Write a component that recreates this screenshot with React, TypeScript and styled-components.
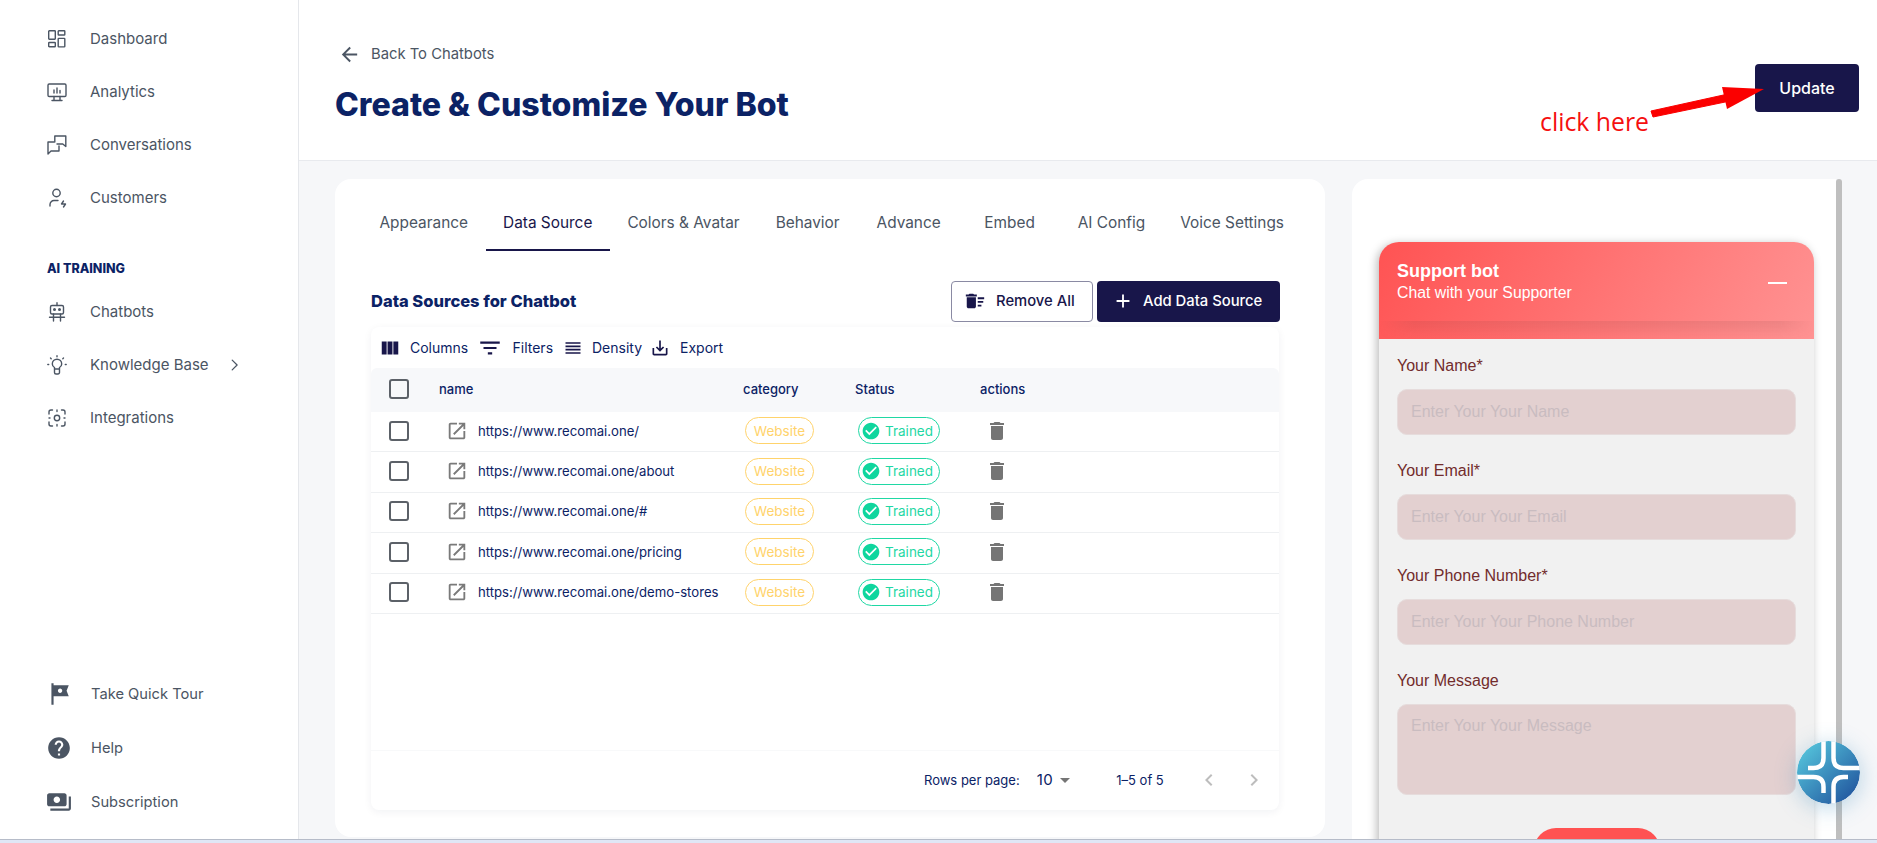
import React from 'react'
import styled, { createGlobalStyle } from 'styled-components'

const GlobalStyle = createGlobalStyle`
  html, body, #root {
    margin: 0;
    height: 100%;
    overflow: hidden;
  }
  body {
    background: #ffffff;
    font-family: Inter, "Liberation Sans", sans-serif;
    color: #0b2265;
  }
`

const paths = {
  help: 'M12 2C6.48 2 2 6.48 2 12s4.48 10 10 10 10-4.48 10-10S17.52 2 12 2zm1 17h-2v-2h2v2zm2.07-7.75l-.9.92C13.45 12.9 13 13.5 13 15h-2v-.5c0-1.1.45-2.1 1.17-2.83l1.24-1.26c.37-.36.59-.86.59-1.41 0-1.1-.9-2-2-2s-2 .9-2 2H8c0-2.21 1.79-4 4-4s4 1.79 4 4c0 .88-.36 1.68-.93 2.25z',
  tour: 'M21 4H7V2H5v20h2v-8h14l-2-5 2-5zm-6 5c0 1.1-.9 2-2 2s-2-.9-2-2 .9-2 2-2 2 .9 2 2z',
  payments: 'M19 14V6c0-1.1-.9-2-2-2H3c-1.1 0-2 .9-2 2v8c0 1.1.9 2 2 2h14c1.1 0 2-.9 2-2zm-9-1c-1.66 0-3-1.34-3-3s1.34-3 3-3 3 1.34 3 3-1.34 3-3 3zm13-6v11c0 1.1-.9 2-2 2H4v-2h17V7h2z',
  columns: 'M14.67 5v14H9.33V5h5.34zm1 14H21V5h-5.33v14zm-7.34 0V5H3v14h5.33z',
  filter: 'M10 18h4v-2h-4v2zM3 6v2h18V6H3zm3 7h12v-2H6v2z',
  density: 'M3 15h18v-2H3v2zm0 4h18v-2H3v2zm0-8h18V9H3v2zm0-6v2h18V5H3z',
  save: 'M19 12v7H5v-7H3v7c0 1.1.9 2 2 2h14c1.1 0 2-.9 2-2v-7h-2zm-6 .67l2.59-2.58L17 11.5l-5 5-5-5 1.41-1.41L11 12.67V3h2z',
  open: 'M19 19H5V5h7V3H5c-1.11 0-2 .9-2 2v14c0 1.1.89 2 2 2h14c1.1 0 2-.9 2-2v-7h-2v7zM14 3v2h3.59l-9.83 9.83 1.41 1.41L19 6.41V10h2V3h-7z',
  trash: 'M6 19c0 1.1.9 2 2 2h8c1.1 0 2-.9 2-2V7H6v12zM19 4h-3.5l-1-1h-5l-1 1H5v2h14V4z',
  check: 'M12 2C6.48 2 2 6.48 2 12s4.48 10 10 10 10-4.48 10-10S17.52 2 12 2zm-2 15l-5-5 1.41-1.41L10 14.17l7.59-7.59L19 8l-9 9z',
  back: 'M20 11H7.83l5.59-5.59L12 4l-8 8 8 8 1.41-1.41L7.83 13H20v-2z',
  add: 'M19 13h-6v6h-2v-6H5v-2h6V5h2v6h6v2z',
  sweep: 'M15 16h4v2h-4zm0-8h7v2h-7zm0 4h6v2h-6zM3 18c0 1.1.9 2 2 2h6c1.1 0 2-.9 2-2V8H3v10zM14 5h-3l-1-1H6L5 5H2v2h12z',
  drop: 'M7 10l5 5 5-5z',
  left: 'M15.41 7.41 14 6l-6 6 6 6 1.41-1.41L10.83 12z',
  right: 'M10 6 8.59 7.41 13.17 12l-4.58 4.59L10 18l6-6z',
}

const Glyph = (props: { d: string; size: number; color: string }) => (
  <svg width={props.size} height={props.size} viewBox="0 0 24 24" fill={props.color} style={{ flexShrink: 0 }}>
    <path d={props.d} />
  </svg>
)

const NavSvg = styled.svg`
  width: 20px;
  height: 20px;
  flex-shrink: 0;
  fill: none;
  stroke: #4b5563;
  stroke-width: 1.4;
  stroke-linecap: round;
  stroke-linejoin: round;
`

const DashIcon = () => (
  <NavSvg viewBox="0 0 20 20">
    <rect x="1.700" y="1.700" width="6.600" height="8.500" rx=".6" />
    <rect x="11.200" y="1.700" width="6.600" height="4.300" rx=".6" />
    <rect x="1.700" y="13.500" width="6.600" height="4.300" rx=".6" />
    <rect x="11.200" y="9.400" width="6.600" height="8.500" rx=".6" />
  </NavSvg>
)
const AnalyticsIcon = () => (
  <NavSvg viewBox="0 0 20 20">
    <rect x="1" y="2" width="18" height="12.500" rx="1.200" />
    <path d="M7 14.500v4M13 14.500v4M5 18.500h10M7 11V8M10 11V6M13 11V8.500" />
  </NavSvg>
)
const ChatIcon = () => (
  <NavSvg viewBox="0 0 20 20">
    <path d="M7.800 7V1h11v10.500l-3-2.500H10" />
    <path d="M7 7H1v12l3-3h8v-5" />
  </NavSvg>
)
const CustomerIcon = () => (
  <NavSvg viewBox="0 0 20 20">
    <circle cx="9.500" cy="5" r="3.700" />
    <path d="M3 18v-1.500a4 4 0 0 1 4-4h4M16.500 13l-2 3h4l-2 3" />
  </NavSvg>
)
const BotIcon = () => (
  <NavSvg viewBox="0 0 20 20">
    <rect x="3.500" y="3.500" width="13" height="8.500" rx="1.500" />
    <path d="M10 .8v2.700M2.500 15.300h15M6.500 12v7M13.500 12v7" />
    <circle cx="7.500" cy="7.500" r=".8" />
    <circle cx="12.500" cy="7.500" r=".8" />
  </NavSvg>
)
const BulbIcon = () => (
  <NavSvg viewBox="0 0 20 20">
    <path d="M7.500 14v-1.500c-1.500-1-2.200-2.300-2.200-3.600a4.700 4.700 0 0 1 9.400 0c0 1.300-.7 2.600-2.200 3.600V14zM7.500 14v3.500a1.500 1.500 0 0 0 1.500 1.500h2a1.500 1.500 0 0 0 1.500-1.500V14" />
    <path d="M10 .8v.9M3.500 3l.7.7M16.500 3l-.7.7M.8 9.500h.9M18.300 9.500h.9" />
  </NavSvg>
)
const IntegrationIcon = () => (
  <NavSvg viewBox="0 0 20 20">
    <circle cx="10" cy="10" r="2.700" />
    <path d="M2 6V4a2 2 0 0 1 2-2h1.500M14.500 2H16a2 2 0 0 1 2 2v2M18 14v2a2 2 0 0 1-2 2h-1.500M5.500 18H4a2 2 0 0 1-2-2v-2M10 2v1.500M10 16.500V18M2 10h1M17 10h1" />
  </NavSvg>
)
const Chevron = () => (
  <NavSvg viewBox="0 0 20 20" style={{ width: 14, height: 14, marginLeft: -4 }}>
    <path d="M6 3l7 7-7 7" strokeWidth="1.800" />
  </NavSvg>
)

const Page = styled.div`
  height: 843px;
  display: flex;
  flex-direction: column;
  overflow: hidden;
  position: relative;
`

const Shell = styled.div`
  flex: 1;
  min-height: 0;
  display: flex;
`

const BottomStrip = styled.div`
  height: 3px;
  background: #e0e7f6;
  border-top: 1px solid #b6bcc9;
`

const Sidebar = styled.aside`
  width: 298px;
  flex-shrink: 0;
  background: #ffffff;
  border-right: 1px solid #e5e7eb;
  display: flex;
  flex-direction: column;
  justify-content: space-between;
`

const NavGroup = styled.nav`
  display: flex;
  flex-direction: column;
  padding-top: 12px;
`

const NavItem = styled.div`
  height: 53px;
  display: flex;
  align-items: center;
  padding-left: 47px;
  gap: 23px;
  font-size: 15px;
  color: #4b5563;
`

const NavLabel = styled.div`
  margin-top: 37px;
  margin-bottom: 9px;
  padding-left: 47px;
  font-size: 12.5px;
  line-height: 15px;
  font-weight: 800;
  color: #0b2265;
`

const FootGroup = styled.nav`
  display: flex;
  flex-direction: column;
  padding-bottom: 10px;
`

const FootItem = styled.div`
  height: 54px;
  display: flex;
  align-items: center;
  padding-left: 46px;
  gap: 19px;
  font-size: 14.7px;
  color: #4b5563;
`

const Main = styled.main`
  flex: 1;
  min-width: 0;
  display: flex;
  flex-direction: column;
  background: #f6f7f9;
`

const Header = styled.header`
  height: 161px;
  flex-shrink: 0;
  background: #ffffff;
  border-bottom: 1px solid #e8eaee;
  display: flex;
  justify-content: space-between;
  padding: 43px 18px 0 37px;
  box-sizing: border-box;
`

const BackLink = styled.div`
  display: flex;
  align-items: center;
  gap: 10px;
  height: 22px;
  padding-left: 2px;
  font-size: 14.8px;
  color: #4b5563;
`

const Title = styled.h1`
  margin: 19px 0 0 -1px;
  font-size: 32.1px;
  line-height: 42px;
  font-weight: 800;
  color: #0b2265;
`

const UpdateButton = styled.button`
  width: 104px;
  height: 48px;
  margin-top: 21px;
  border: 0;
  border-radius: 4px;
  background: #18164a;
  color: #ffffff;
  font: 500 16px Inter, sans-serif;
`

const Content = styled.div`
  flex: 1;
  min-height: 0;
  display: flex;
  padding: 18px 0 0 36px;
  gap: 27px;
`

const LeftCard = styled.section`
  width: 990px;
  height: 658px;
  flex-shrink: 0;
  background: #ffffff;
  border-radius: 16px;
  padding: 18px 46px 0 36px;
  box-sizing: border-box;
`

const Tabs = styled.div`
  display: flex;
  height: 54px;
  margin-left: -9px;
`

const Tab = styled.div<{ $active?: boolean }>`
  flex-shrink: 0;
  min-width: 101px;
  padding: 0 17.500px 2px;
  box-sizing: border-box;
  display: flex;
  align-items: center;
  justify-content: center;
  font-size: 15.4px;
  white-space: nowrap;
  color: ${(p) => (p.$active ? '#18164a' : '#4b5563')};
  border-bottom: 2px solid ${(p) => (p.$active ? '#18164a' : 'transparent')};
`

const TitleRow = styled.div`
  margin-top: 30px;
  height: 41px;
  display: flex;
  align-items: center;
  justify-content: space-between;
  margin-right: -1px;
`

const SectionTitle = styled.h2`
  margin: 0 0 2px;
  font-size: 16.5px;
  font-weight: 800;
  color: #0b2265;
`

const ButtonGroup = styled.div`
  display: flex;
  gap: 4px;
`

const OutlineButton = styled.button`
  width: 142px;
  height: 41px;
  display: flex;
  align-items: center;
  gap: 10px;
  padding: 0 0 2px 12px;
  border: 1px solid #8a8aa3;
  border-radius: 4px;
  background: #ffffff;
  color: #18164a;
  font: 500 14.8px Inter, sans-serif;
`

const SolidButton = styled.button`
  width: 183px;
  height: 41px;
  display: flex;
  align-items: center;
  gap: 9px;
  padding: 0 0 2px 15px;
  border: 0;
  border-radius: 4px;
  background: #18164a;
  color: #ffffff;
  font: 500 14.8px Inter, sans-serif;
`

const TablePanel = styled.div`
  margin-top: 5px;
  height: 483px;
  background: #ffffff;
  border-radius: 8px;
  box-shadow: 0 2px 8px rgba(20, 30, 60, 0.06);
  display: flex;
  flex-direction: column;
`

const Toolbar = styled.div`
  height: 41px;
  flex-shrink: 0;
  display: flex;
  align-items: center;
  padding-left: 8px;
  font-size: 14px;
  color: #0b2265;
`

const ToolItem = styled.div<{ $gap: number; $width: number }>`
  display: flex;
  align-items: center;
  gap: ${(p) => p.$gap}px;
  width: ${(p) => p.$width}px;
`

const columns = '68px 304px 112px 125px 1fr'

const HeadRow = styled.div`
  height: 44px;
  flex-shrink: 0;
  padding-bottom: 2px;
  box-sizing: border-box;
  display: grid;
  grid-template-columns: ${columns};
  align-items: center;
  background: #f7f8fa;
  border-radius: 6px 6px 0 0;
  font-size: 13px;
  font-weight: 500;
  color: #0b2265;
`

const Row = styled.div`
  height: 40.4px;
  flex-shrink: 0;
  box-sizing: border-box;
  padding-bottom: 2px;
  display: grid;
  grid-template-columns: ${columns};
  align-items: center;
  border-bottom: 1px solid #eef0f2;
  font-size: 13px;
  color: #0b2265;
`

const CheckCell = styled.div`
  padding-left: 18px;
  display: flex;
`

const CheckBox = styled.div`
  width: 20px;
  height: 20px;
  box-sizing: border-box;
  border: 2px solid #5c6168;
  border-radius: 3px;
`

const NameCell = styled.div`
  display: flex;
  align-items: center;
  gap: 10px;
  padding-left: 7px;
  white-space: nowrap;
  font-size: 13.15px;
`

const Chip = styled.div<{ $color: string; $width: number; $start?: boolean }>`
  width: ${(p) => p.$width}px;
  height: 27px;
  box-sizing: border-box;
  display: flex;
  align-items: center;
  justify-content: ${(p) => (p.$start ? 'flex-start' : 'center')};
  padding-left: ${(p) => (p.$start ? 2 : 0)}px;
  gap: 4px;
  border: 1px solid ${(p) => p.$color};
  border-radius: 14px;
  color: ${(p) => p.$color};
  font-size: 13.5px;
`

const ChipCell = styled.div<{ $pad: number }>`
  padding-left: ${(p) => p.$pad}px;
`

const ActionCell = styled.div`
  padding-left: 5px;
  display: flex;
`

const TableFooter = styled.div`
  margin-top: auto;
  height: 60px;
  padding-bottom: 2px;
  box-sizing: border-box;
  flex-shrink: 0;
  border-top: 1px solid #f8f9fa;
  display: flex;
  align-items: center;
  padding-left: 553px;
  font-size: 13px;
  color: #0b2265;
`

const RowsValue = styled.span`
  margin-left: 17px;
  font-size: 15px;
  letter-spacing: 0.5px;
`

const RangeText = styled.span`
  margin-left: 39px;
  margin-right: 33px;
`

const PagerGap = styled.span`
  width: 21px;
`

const RightColumn = styled.div`
  display: flex;
  height: 100%;
`

const RightCard = styled.section`
  width: 484px;
  background: #ffffff;
  border-radius: 16px 0 0 0;
  padding: 63px 0 0 27px;
  box-sizing: border-box;
  overflow: hidden;
`

const ScrollThumb = styled.div`
  width: 6px;
  background: #bfbfbf;
  border-radius: 3px 3px 0 0;
`

const Widget = styled.div`
  width: 435px;
  border-radius: 20px 20px 0 0;
  box-shadow: -2px 2px 10px rgba(0, 0, 0, 0.28);
  background: #f1f1f1;
  font-family: "Liberation Sans", Arial, sans-serif;
`

const WidgetHead = styled.div`
  position: relative;
  height: 97px;
  box-sizing: border-box;
  padding: 19px 18px 0;
  border-radius: 20px 20px 0 0;
  background: linear-gradient(120deg, #ff5353, #ff9393);
  color: #ffffff;
  display: flex;
  justify-content: space-between;
  &::after {
    content: '';
    position: absolute;
    left: 0;
    right: 0;
    bottom: 0;
    height: 18px;
    background: linear-gradient(rgba(110, 60, 60, 0.12), rgba(110, 60, 60, 0));
    mask-image: linear-gradient(90deg, transparent, #000 8%, #000 92%, transparent);
  }
`

const WidgetName = styled.div`
  font-size: 18px;
  line-height: 21px;
  font-weight: 700;
`

const WidgetSub = styled.div`
  font-size: 15.8px;
  line-height: 21px;
`

const MinusBar = styled.div`
  width: 19px;
  height: 2px;
  margin: 21px 9px 0 0;
  background: #ffffff;
`

const WidgetBody = styled.div`
  padding: 17px 18px 0;
  display: flex;
  flex-direction: column;
`

const FieldLabel = styled.div`
  font-size: 16px;
  line-height: 20px;
  color: #722c2c;
`

const FieldBox = styled.div<{ $tall?: boolean }>`
  margin: 13px 0 26px;
  height: ${(p) => (p.$tall ? 91 : 46)}px;
  box-sizing: border-box;
  padding: ${(p) => (p.$tall ? '12px' : '0')} 13px 0;
  display: flex;
  align-items: ${(p) => (p.$tall ? 'flex-start' : 'center')};
  background: #e3d0d0;
  border: 1px solid #e6dcdc;
  border-radius: 10px;
  font-size: 16px;
  color: #c9bcc0;
`

const SendButton = styled.div`
  width: 126px;
  height: 44px;
  margin: 7px auto 0;
  border-radius: 22px;
  background: #ff5252;
`

const FloatingLogo = styled.svg`
  position: absolute;
  left: 1797px;
  top: 741px;
  width: 63px;
  height: 63px;
  border-radius: 50%;
  box-shadow: 0 4px 22px rgba(60, 140, 190, 0.35);
`

const Annotation = styled.div`
  position: absolute;
  left: 1540px;
  top: 104px;
  font-family: "Open Sans", sans-serif;
  font-size: 24.8px;
  line-height: 34px;
  color: #f50f0f;
`

const ArrowMark = styled.svg`
  position: absolute;
  left: 1640px;
  top: 80px;
  width: 130px;
  height: 40px;
`

const tabs = ['Appearance', 'Data Source', 'Colors & Avatar', 'Behavior', 'Advance', 'Embed', 'AI Config', 'Voice Settings']
const urls = [
  'https://www.recomai.one/',
  'https://www.recomai.one/about',
  'https://www.recomai.one/#',
  'https://www.recomai.one/pricing',
  'https://www.recomai.one/demo-stores',
]
const fields = ['Your Name*', 'Your Email*', 'Your Phone Number*']

export default function App() {
  return (
    <Page>
      <GlobalStyle />
      <Shell>
        <Sidebar>
          <NavGroup>
            <NavItem><DashIcon />Dashboard</NavItem>
            <NavItem><AnalyticsIcon />Analytics</NavItem>
            <NavItem><ChatIcon />Conversations</NavItem>
            <NavItem><CustomerIcon />Customers</NavItem>
            <NavLabel>AI TRAINING</NavLabel>
            <NavItem><BotIcon />Chatbots</NavItem>
            <NavItem><BulbIcon /><span>Knowledge Base</span><Chevron /></NavItem>
            <NavItem><IntegrationIcon />Integrations</NavItem>
          </NavGroup>
          <FootGroup>
            <FootItem><Glyph d={paths.tour} size={26} color="#4b5563" />Take Quick Tour</FootItem>
            <FootItem><Glyph d={paths.help} size={26} color="#4b5563" />Help</FootItem>
            <FootItem><Glyph d={paths.payments} size={26} color="#4b5563" />Subscription</FootItem>
          </FootGroup>
        </Sidebar>
        <Main>
          <Header>
            <div>
              <BackLink><Glyph d={paths.back} size={23} color="#4b5563" />Back To Chatbots</BackLink>
              <Title>Create &amp; Customize Your Bot</Title>
            </div>
            <UpdateButton>Update</UpdateButton>
          </Header>
          <Content>
            <LeftCard>
              <Tabs>
                {tabs.map((t) => (
                  <Tab key={t} $active={t === 'Data Source'}>{t}</Tab>
                ))}
              </Tabs>
              <TitleRow>
                <SectionTitle>Data Sources for Chatbot</SectionTitle>
                <ButtonGroup>
                  <OutlineButton><Glyph d={paths.sweep} size={22} color="#18164a" />Remove All</OutlineButton>
                  <SolidButton><Glyph d={paths.add} size={22} color="#ffffff" />Add Data Source</SolidButton>
                </ButtonGroup>
              </TitleRow>
              <TablePanel>
                <Toolbar>
                  <ToolItem $gap={9} $width={98}><Glyph d={paths.columns} size={22} color="#18164a" />Columns</ToolItem>
                  <ToolItem $gap={9.500} $width={86}><Glyph d={paths.filter} size={26} color="#18164a" />Filters</ToolItem>
                  <ToolItem $gap={9} $width={87}><Glyph d={paths.density} size={20} color="#18164a" />Density</ToolItem>
                  <ToolItem $gap={10} $width={80}><Glyph d={paths.save} size={20} color="#18164a" />Export</ToolItem>
                </Toolbar>
                <HeadRow>
                  <CheckCell><CheckBox /></CheckCell>
                  <div>name</div>
                  <div>category</div>
                  <div>Status</div>
                  <div>actions</div>
                </HeadRow>
                {urls.map((u) => (
                  <Row key={u}>
                    <CheckCell><CheckBox /></CheckCell>
                    <NameCell><Glyph d={paths.open} size={22} color="#7a7a7a" />{u}</NameCell>
                    <ChipCell $pad={2}><Chip $color="#ffd36b" $width={69}>Website</Chip></ChipCell>
                    <ChipCell $pad={3}>
                      <Chip $color="#1fd8a4" $width={82} $start><Glyph d={paths.check} size={20} color="#0fd69e" />Trained</Chip>
                    </ChipCell>
                    <ActionCell><Glyph d={paths.trash} size={24} color="#757575" /></ActionCell>
                  </Row>
                ))}
                <TableFooter>
                  Rows per page:
                  <RowsValue>10</RowsValue>
                  <Glyph d={paths.drop} size={24} color="#757575" />
                  <RangeText>1–5 of 5</RangeText>
                  <Glyph d={paths.left} size={24} color="#bdbdbd" />
                  <PagerGap />
                  <Glyph d={paths.right} size={24} color="#bdbdbd" />
                </TableFooter>
              </TablePanel>
            </LeftCard>
            <RightColumn>
              <RightCard>
                <Widget>
                  <WidgetHead>
                    <div>
                      <WidgetName>Support bot</WidgetName>
                      <WidgetSub>Chat with your Supporter</WidgetSub>
                    </div>
                    <MinusBar />
                  </WidgetHead>
                  <WidgetBody>
                    {fields.map((f) => (
                      <React.Fragment key={f}>
                        <FieldLabel>{f}</FieldLabel>
                        <FieldBox>{'Enter Your ' + f.replace('*', '')}</FieldBox>
                      </React.Fragment>
                    ))}
                    <FieldLabel>Your Message</FieldLabel>
                    <FieldBox $tall>Enter Your Your Message</FieldBox>
                    <SendButton />
                  </WidgetBody>
                </Widget>
              </RightCard>
              <ScrollThumb />
            </RightColumn>
          </Content>
        </Main>
      </Shell>
      <BottomStrip />
      <Annotation>click here</Annotation>
      <ArrowMark viewBox="0 0 130 40">
        <path d="M11 31 L13 37 L90 21 L88 14 Z" fill="#fb0000" stroke="#fb0000" strokeLinejoin="round" />
        <path d="M124 9 L82 7 L87 29 Z" fill="#fb0000" />
      </ArrowMark>
      <FloatingLogo viewBox="0 0 63 63">
        <defs>
          <linearGradient id="logoFill" x1="0" y1="0" x2="1" y2="1">
            <stop offset="0" stopColor="#5ad0e2" />
            <stop offset="1" stopColor="#1c4a98" />
          </linearGradient>
        </defs>
        <circle cx="31.500" cy="31.500" r="31.500" fill="url(#logoFill)" />
        <g fill="none" stroke="#ffffff" strokeWidth="4.500">
          <path d="M26.500 0V17Q26.500 27 16.500 27H11" />
          <path d="M36.500 0V17Q36.500 27 46.500 27H63" />
          <path d="M0 36H16.500Q26.500 36 26.500 46V52" />
          <path d="M51 36H46.500Q36.500 36 36.500 46V63" />
        </g>
      </FloatingLogo>
    </Page>
  )
}
